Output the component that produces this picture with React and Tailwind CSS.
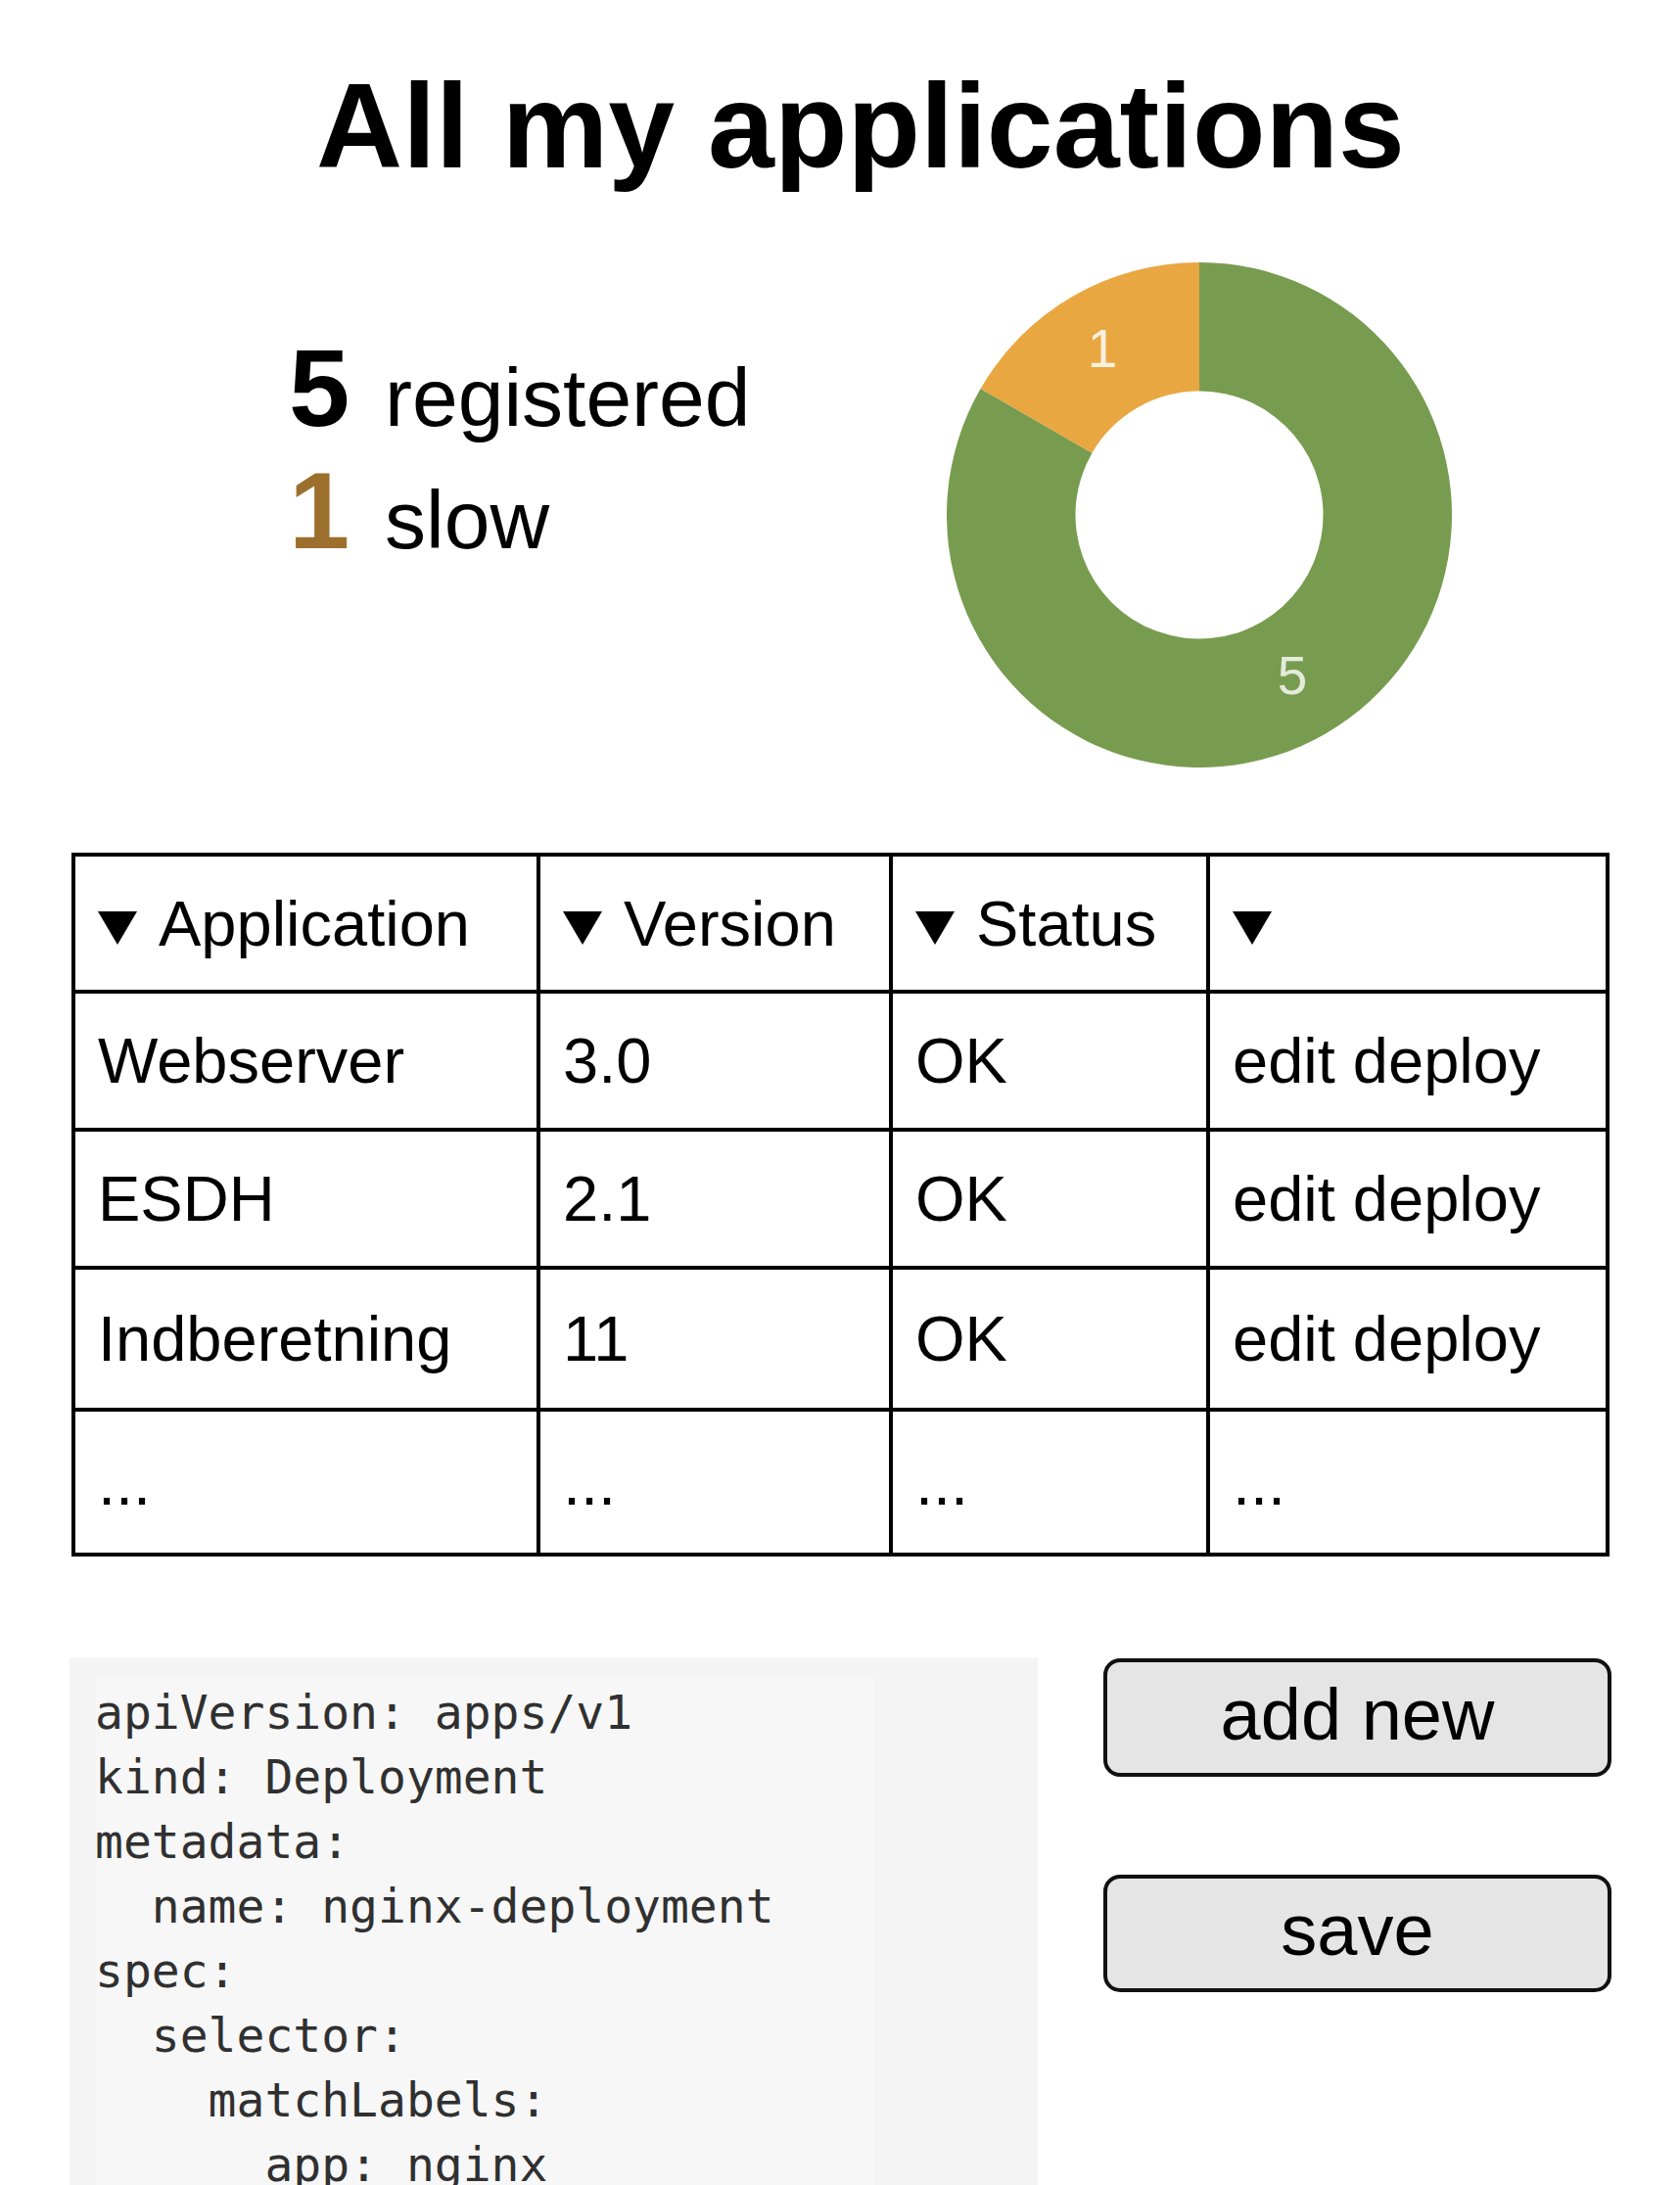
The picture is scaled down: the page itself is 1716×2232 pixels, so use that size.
import React from "react";

const Tri = () => (
  <svg width="40" height="34" viewBox="0 0 40 34" className="inline-block mr-[22px]">
    <path d="M0 0 H40 L20 34 Z" fill="#000" />
  </svg>
);

const rows = [
  ["Webserver", "3.0", "OK", "edit deploy"],
  ["ESDH", "2.1", "OK", "edit deploy"],
  ["Indberetning", "11", "OK", "edit deploy"],
  ["...", "...", "...", "..."],
];

const rowH = ["h-[141px]", "h-[141px]", "h-[145px]", "h-[148px]"];

const code = [
  "apiVersion: apps/v1",
  "kind: Deployment",
  "metadata:",
  "  name: nginx-deployment",
  "spec:",
  "  selector:",
  "    matchLabels:",
  "      app: nginx",
  "  replicas: 2",
  "  template:",
];

export default function App() {
  const cell = "border-r-4 border-b-4 border-black pl-[23px] align-middle p-0";
  return (
    <div
      className="w-[1716px] h-[2232px] overflow-hidden bg-white text-black"
      style={{ fontFamily: '"Liberation Sans", Arial, sans-serif' }}
    >
      <h1 className="mt-[68px] text-center pl-[42px] text-[122px] leading-[122px] font-bold whitespace-nowrap">
        All my applications
      </h1>

      <div className="mt-[78px] flex">
        <div className="w-[967px] pl-[295px] pt-[66px] flex flex-col">
          <div className="flex items-baseline h-[125px]">
            <span className="w-[62px] text-center text-[112px] leading-[125px] font-bold">5</span>
            <span className="ml-[36px] text-[84px] leading-[96px]">registered</span>
          </div>
          <div className="flex items-baseline h-[125px]">
            <span className="w-[62px] text-center text-[112px] leading-[125px] font-bold text-[#9c6f2c]">1</span>
            <span className="ml-[36px] text-[84px] leading-[96px]">slow</span>
          </div>
        </div>
        <div>
          <svg width="516" height="516" viewBox="0 0 516 516" className="block">
            <path
              d="M258 0 A258 258 0 1 1 34.57 129 L148.45 194.75 A126.5 126.5 0 1 0 258 131.5 Z"
              fill="#789c4f"
            />
            <path
              d="M258 0 A258 258 0 0 0 34.57 129 L148.45 194.75 A126.5 126.5 0 0 1 258 131.5 Z"
              fill="#e9a742"
            />
            <text
              x="159"
              y="88"
              textAnchor="middle"
              dominantBaseline="central"
              fontSize="55"
              fill="#fbf0dc"
              fontFamily="Liberation Sans, Arial, sans-serif"
            >
              1
            </text>
            <text
              x="353"
              y="422"
              textAnchor="middle"
              dominantBaseline="central"
              fontSize="55"
              fill="#e4ebdb"
              fontFamily="Liberation Sans, Arial, sans-serif"
            >
              5
            </text>
          </svg>
        </div>
      </div>

      <table
        className="ml-[73px] mt-[87px] border-separate border-spacing-0 border-l-4 border-t-4 border-black text-[65px] leading-[75px] table-fixed"
        style={{ width: 1571 }}
      >
        <colgroup>
          <col className="w-[475px]" />
          <col className="w-[360px]" />
          <col className="w-[324px]" />
          <col className="w-[408px]" />
        </colgroup>
        <thead>
          <tr className="h-[140px]">
            <th className={cell + " text-left font-normal"}><Tri />Application</th>
            <th className={cell + " text-left font-normal"}><Tri />Version</th>
            <th className={cell + " text-left font-normal"}><Tri />Status</th>
            <th className={cell + " text-left font-normal"}><Tri /></th>
          </tr>
        </thead>
        <tbody>
          {rows.map((r, i) => (
            <tr key={i} className={rowH[i]}>
              {r.map((c, j) => (
                <td key={j} className={cell + " whitespace-nowrap"}>{c}</td>
              ))}
            </tr>
          ))}
        </tbody>
      </table>

      <div className="mt-[103px] flex">
        <div className="ml-[71px] w-[989px] h-[600px] bg-[#f4f4f4] pl-[26px] pt-[21px]">
          <pre
            className="w-[796px] h-full bg-[#f7f7f7] pt-[2px] text-[48px] leading-[66px] text-[#303030]"
            style={{ fontFamily: '"DejaVu Sans Mono", "Liberation Mono", monospace' }}
          >
            {code.join("\n")}
          </pre>
        </div>
        <div className="ml-[67px] flex flex-col gap-[100px] pt-[1px]">
          <button className="w-[519px] h-[121px] rounded-[17px] border-4 border-[#111] bg-[#e5e5e5] text-[74px] leading-none text-black pb-[6px]">
            add new
          </button>
          <button className="w-[519px] h-[120px] rounded-[17px] border-4 border-[#111] bg-[#e5e5e5] text-[74px] leading-none text-black pb-[6px]">
            save
          </button>
        </div>
      </div>
    </div>
  );
}
